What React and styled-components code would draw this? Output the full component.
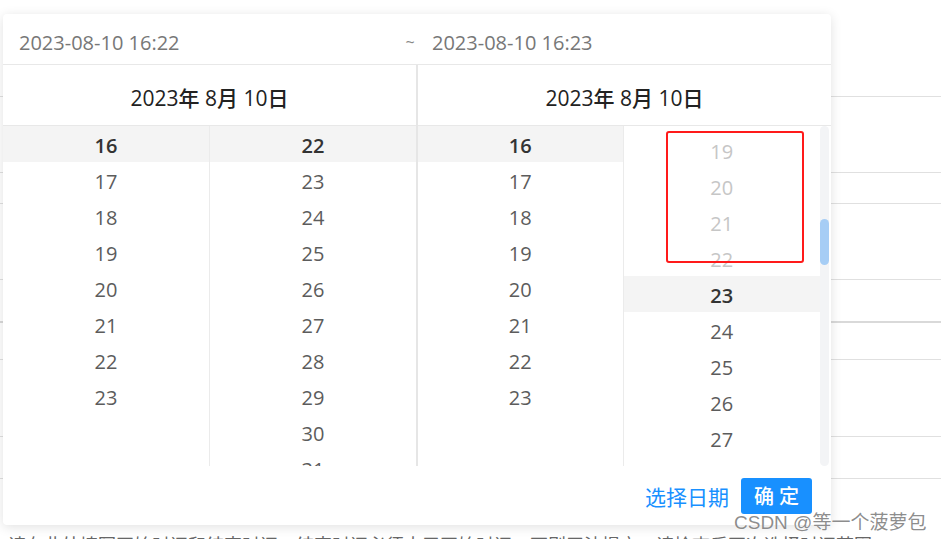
import React from 'react';
import styled, { createGlobalStyle } from 'styled-components';

const ROW = 36;
const BLUE = '#1890ff';

const GlobalStyle = createGlobalStyle`
  html, body {
    margin: 0;
    padding: 0;
    background: #fff;
  }
  body {
    font-family: "Open Sans", "Noto Sans CJK SC", sans-serif;
  }
`;

const Page = styled.div`
  position: relative;
  width: 941px;
  height: 539px;
  overflow: hidden;
  background: #fff;
`;

const TableBg = styled.div`
  display: flex;
  flex-direction: column;
`;

const TableLine = styled.div`
  height: ${p => p.$h}px;
  border-bottom: ${p => (p.$thick ? '2px solid #d9d9d9' : '1px solid #e0e0e0')};
  box-sizing: border-box;
`;

const BgText = styled.div`
  padding: 54px 0 0 8px;
  font-size: 18px;
  line-height: 24px;
  color: #666;
  white-space: nowrap;
`;

const Popup = styled.div`
  position: absolute;
  left: 3px;
  top: 14px;
  width: 828px;
  height: 511px;
  background: #fff;
  border-radius: 4px;
  box-shadow: 0 2px 12px rgba(0, 0, 0, 0.12);
  display: flex;
  flex-direction: column;
  overflow: hidden;
`;

const InputBar = styled.div`
  height: 51px;
  box-sizing: border-box;
  padding-top: 6px;
  border-bottom: 1px solid #e8e8e8;
  display: flex;
  align-items: center;
  font-size: 20px;
  color: #777;
`;

const DateInput = styled.div`
  width: ${p => p.$w}px;
  padding-left: ${p => p.$pad}px;
  box-sizing: border-box;
`;

const Tilde = styled.div`
  width: 20px;
  text-align: center;
  font-size: 16px;
  color: #888;
`;

const Panes = styled.div`
  flex: 1;
  display: flex;
`;

const Pane = styled.div`
  width: ${p => p.$w}px;
  display: flex;
  flex-direction: column;
  border-right: ${p => (p.$divider ? '2px solid #e6e6e6' : 'none')};
`;

const PaneHeader = styled.div`
  height: 61px;
  box-sizing: border-box;
  padding-top: 3px;
  border-bottom: 1px solid #e8e8e8;
  display: flex;
  align-items: center;
  justify-content: center;
  font-size: 21px;
  font-weight: 500;
  color: #222;
`;

const Columns = styled.div`
  height: 340px;
  display: flex;
`;

const Column = styled.div`
  width: ${p => p.$w}px;
  overflow: hidden;
  border-right: ${p => (p.$divider ? '1px solid #ebebeb' : 'none')};
`;

const List = styled.div`
  margin-top: ${p => -p.$scroll}px;
`;

const Cell = styled.div`
  height: ${ROW}px;
  display: flex;
  align-items: center;
  justify-content: center;
  padding-top: 2px;
  box-sizing: border-box;
  font-size: 20px;
  background: ${p => (p.$active ? '#f4f4f4' : 'transparent')};
  font-weight: ${p => (p.$active ? 600 : 400)};
  color: ${p => (p.$active ? '#333' : p.$disabled ? '#c6c6c6' : '#5c5c5c')};
`;

const ScrollTrack = styled.div`
  position: relative;
  width: 9px;
  margin-right: 2px;
  background: #f3f4f6;
  border-radius: 5px;
`;

const ScrollThumb = styled.div`
  position: absolute;
  left: 0;
  right: 0;
  top: ${p => p.$top}px;
  height: ${p => p.$h}px;
  background: #a6cdf5;
  border-radius: 5px;
`;

const Footer = styled.div`
  flex: 1;
  display: flex;
  align-items: center;
  justify-content: flex-end;
  gap: 12px;
  padding: 0 19px 0 0;
`;

const LinkButton = styled.span`
  font-size: 21px;
  color: ${BLUE};
  cursor: pointer;
`;

const ConfirmButton = styled.button`
  width: 71px;
  height: 36px;
  border: none;
  border-radius: 3px;
  background: ${BLUE};
  color: #fff;
  font-family: inherit;
  font-size: 20px;
  font-weight: 500;
  padding: 0;
  cursor: pointer;
`;

const Annotation = styled.div`
  position: absolute;
  left: 666px;
  top: 131px;
  width: 138px;
  height: 132px;
  box-sizing: border-box;
  border: 2px solid #ff1a1a;
  border-radius: 3px;
`;

const Watermark = styled.div`
  position: absolute;
  left: 734px;
  top: 507px;
  font-family: "Liberation Sans", "Noto Sans CJK SC", sans-serif;
  font-size: 19px;
  color: rgba(120, 120, 120, 0.85);
  text-shadow: 0 0 1px #fff;
  white-space: nowrap;
`;

const range = (from, to) => Array.from({ length: to - from + 1 }, (_, i) => from + i);

const bgRows = [
  { h: 97 }, { h: 76 }, { h: 31 }, { h: 76 }, { h: 43, thick: true },
  { h: 37 }, { h: 77 }, { h: 42 },
];

function TimeColumn({ items, active, disabledBelow = -1, scroll = 0, width, divider }) {
  return (
    <Column $w={width} $divider={divider}>
      <List $scroll={scroll}>
        {items.map(n => (
          <Cell key={n} $active={n === active} $disabled={n < disabledBelow}>
            {n}
          </Cell>
        ))}
      </List>
    </Column>
  );
}

export default function App() {
  const endMinute = 23;
  // place the selected minute at 150px from the top of its column
  const endScroll = endMinute * ROW - 150;

  return (
    <Page>
      <GlobalStyle />
      <TableBg>
        {bgRows.map((r, i) => <TableLine key={i} $h={r.h} $thick={r.thick} />)}
        <BgText>
          请在此处填写开始时间和结束时间，结束时间必须大于开始时间，否则无法提交，请检查后再次选择时间范围。
        </BgText>
      </TableBg>

      <Popup>
        <InputBar>
          <DateInput $w={397} $pad={16}>2023-08-10 16:22</DateInput>
          <Tilde>~</Tilde>
          <DateInput $pad={12}>2023-08-10 16:23</DateInput>
        </InputBar>

        <Panes>
          <Pane $w={413} $divider>
            <PaneHeader>2023年 8月 10日</PaneHeader>
            <Columns>
              <TimeColumn items={range(16, 23)} active={16} width={206} divider />
              <TimeColumn items={range(22, 59)} active={22} width={206} />
            </Columns>
          </Pane>
          <Pane $w={413}>
            <PaneHeader>2023年 8月 10日</PaneHeader>
            <Columns>
              <TimeColumn items={range(16, 23)} active={16} width={205} divider />
              <TimeColumn
                items={range(0, 59)}
                active={endMinute}
                disabledBelow={endMinute}
                scroll={endScroll}
                width={197}
              />
              <ScrollTrack>
                <ScrollThumb $top={93} $h={46} />
              </ScrollTrack>
            </Columns>
          </Pane>
        </Panes>

        <Footer>
          <LinkButton>选择日期</LinkButton>
          <ConfirmButton>确 定</ConfirmButton>
        </Footer>
      </Popup>

      <Annotation />
      <Watermark>CSDN @等一个菠萝包</Watermark>
    </Page>
  );
}
